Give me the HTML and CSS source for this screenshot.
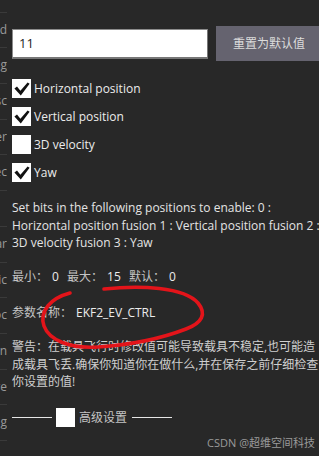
FILE: index.html
```
<!doctype html>
<html>
<head>
<meta charset="UTF-8">
<title>EKF2_EV_CTRL</title>
<link rel="stylesheet" href="styles.css">
</head>
<body>
  <div class="page">
    <div class="sidebar">
      <div class="side-row"></div>
      <div class="side-row">Speed</div>
      <div class="side-row">Config</div>
      <div class="side-row">Misc</div>
      <div class="side-row">Filter</div>
      <div class="side-row">Spec</div>
      <div class="side-row"></div>
      <div class="side-row">Radar</div>
      <div class="side-row">Magic</div>
      <div class="side-row">Proc</div>
      <div class="side-row">Option</div>
      <div class="side-row">Store</div>
      <div class="side-row">Tuning</div>
      <div class="side-row"></div>
    </div>

    <div class="main">
      <div class="topbar">
        <div class="value-input">11</div>
        <div class="reset-btn">重置为默认值</div>
      </div>

      <div class="checks">
        <div class="check-row">
          <span class="box"><svg viewBox="0 0 19 19" width="19" height="19"><path d="M2.4 9.6 L5 7.6 L8.4 11.8 L15.6 3.4 L17.6 4.8 L8.8 16.4 Z" fill="#111"/></svg></span>
          <span class="check-label">Horizontal position</span>
        </div>
        <div class="check-row">
          <span class="box"><svg viewBox="0 0 19 19" width="19" height="19"><path d="M2.4 9.6 L5 7.6 L8.4 11.8 L15.6 3.4 L17.6 4.8 L8.8 16.4 Z" fill="#111"/></svg></span>
          <span class="check-label">Vertical position</span>
        </div>
        <div class="check-row">
          <span class="box"></span>
          <span class="check-label">3D velocity</span>
        </div>
        <div class="check-row">
          <span class="box"><svg viewBox="0 0 19 19" width="19" height="19"><path d="M2.4 9.6 L5 7.6 L8.4 11.8 L15.6 3.4 L17.6 4.8 L8.8 16.4 Z" fill="#111"/></svg></span>
          <span class="check-label">Yaw</span>
        </div>
      </div>

      <p class="desc">Set bits in the following positions to enable: 0 : Horizontal position fusion 1 : Vertical position fusion 2 : 3D velocity fusion 3 : Yaw</p>

      <div class="range-row">
        <span class="cn">最小：</span><span class="num">0</span>
        <span class="cn">最大：</span><span class="num">15</span>
        <span class="cn">默认：</span><span class="num">0</span>
      </div>

      <div class="param-row">
        <span class="cn">参数名称：</span><span class="param-name">EKF2_EV_CTRL</span>
      </div>

      <p class="warning">警告：在载具飞行时修改值可能导致载具不稳定,也可能造成载具飞丢.确保你知道你在做什么,并在保存之前仔细检查你设置的值!</p>

      <div class="advanced">
        <span class="rule"></span>
        <span class="box"></span>
        <span class="adv-label">高级设置</span>
        <span class="rule"></span>
      </div>
    </div>
  </div>

  <svg class="scribble" viewBox="0 0 319 456" width="319" height="456">
    <path d="M104 289 C140 285 184 287 198 303 C207 314 202 323 186 329 C160 339 128 345 98 347 C70 349 49 340 44 326 C39 311 51 298 70 293" fill="none" stroke="#e3141a" stroke-width="3.6" stroke-linecap="round"/>
  </svg>

  <div class="watermark">CSDN @超维空间科技</div>
</body>
</html>
```

FILE: styles.css
```
html, body {
  margin: 0;
  padding: 0;
}

body {
  width: 319px;
  height: 456px;
  overflow: hidden;
  position: relative;
  background-color: #282828;
  font-family: "Open Sans", "Noto Sans CJK SC", sans-serif;
  color: #e6e6e6;
}

.page {
  display: flex;
}

.sidebar {
  width: 7px;
  flex: none;
  overflow: hidden;
  margin-top: -23px;
}

.side-row {
  height: 34.7px;
  border-bottom: 1px solid #3a3a3a;
  line-height: 34.7px;
  font-size: 12px;
  color: #9a9a9a;
  white-space: nowrap;
  direction: rtl;
  text-align: right;
}

.main {
  width: 310px;
  flex: none;
  margin-left: 5px;
}

.topbar {
  display: flex;
  align-items: center;
  gap: 8px;
  margin-top: 26px;
  height: 35px;
}

.value-input {
  width: 188px;
  height: 27px;
  line-height: 27px;
  padding-left: 6px;
  background: #fff;
  border: 1px solid #8c8c8c;
  border-right-color: #777;
  border-bottom: 2px solid #777;
  color: #1e1e1e;
  font-size: 13px;
}

.reset-btn {
  flex: 1;
  height: 35px;
  line-height: 35px;
  background-color: #65636f;
  color: #dcdcdc;
  text-align: center;
  font-size: 12px;
}

.checks {
  margin-top: 18px;
  display: flex;
  flex-direction: column;
  gap: 9px;
}

.check-row {
  display: flex;
  align-items: center;
  height: 19px;
}

.box {
  width: 19px;
  height: 19px;
  background: #fff;
  flex: none;
  display: block;
}

.box svg {
  display: block;
}

.check-label {
  margin-left: 3px;
  font-size: 12px;
  color: #ececec;
}

.desc {
  margin: 17px 0 0;
  font-size: 12px;
  line-height: 17.5px;
  color: #e4e4e4;
}

.range-row,
.param-row {
  height: 18px;
  line-height: 18px;
  font-size: 12px;
  white-space: nowrap;
}

.range-row {
  margin-top: 16.5px;
}

.param-row {
  margin-top: 18px;
}

.cn {
  color: #c4c4c4;
}

.num {
  margin: 0 5px 0 4px;
  color: #ececec;
}

.param-name {
  margin-left: 4px;
  color: #ececec;
}

.warning {
  margin: 16px 0 0;
  font-size: 12px;
  line-height: 17.5px;
  color: #cfcfcf;
}

.advanced {
  margin-top: 17px;
  display: flex;
  align-items: center;
  height: 19px;
}

.rule {
  width: 40px;
  height: 1px;
  background: #e6e6e6;
}

.advanced .box {
  margin: 0 4px;
}

.adv-label {
  font-size: 12px;
  color: #c4c4c4;
  margin-right: 5px;
}

.scribble {
  position: absolute;
  left: 0;
  top: 0;
  pointer-events: none;
}

.watermark {
  position: absolute;
  right: 4px;
  top: 435px;
  font-size: 11px;
  line-height: 16px;
  color: #9a9a9a;
  white-space: nowrap;
}
```
